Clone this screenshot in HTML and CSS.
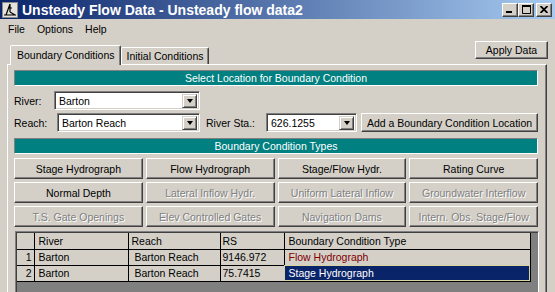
FILE: index.html
```html
<!DOCTYPE html>
<html lang="en">
<head>
  <meta charset="UTF-8">
  <title>Unsteady Flow Data - Unsteady flow data2</title>
  <link rel="stylesheet" href="styles.css">
</head>
<body>
  <!-- Title bar -->
  <div class="titlebar">
    <svg class="title-icon" width="16" height="16" viewBox="0 0 16 16">
      <rect x="0.5" y="0.5" width="15" height="15" fill="#e4e2dc" stroke="#8a8a8a"/>
      <path d="M8 2 L8 10 M8 2 L4 13 M8 10 L13 13 M2 13 L14 13 M6 6 L10 6" stroke="#000" stroke-width="1.2" fill="none"/>
    </svg>
    <span class="title-text">Unsteady Flow Data - Unsteady flow data2</span>
    <div class="title-controls">
      <span class="ctl">
        <svg width="8" height="7" viewBox="0 0 8 7"><rect x="0" y="5" width="6" height="2" fill="#000"/></svg>
      </span>
      <span class="ctl">
        <svg width="9" height="9" viewBox="0 0 9 9"><path d="M0.5 1.5 H8.5 V8.5 H0.5 Z" stroke="#000" fill="none"/><rect x="0" y="0" width="9" height="2" fill="#000"/></svg>
      </span>
      <span class="ctl close">
        <svg width="8" height="7" viewBox="0 0 8 7"><path d="M0.5 0 L7.5 7 M7.5 0 L0.5 7" stroke="#000" stroke-width="1.8"/></svg>
      </span>
    </div>
  </div>

  <!-- Menu -->
  <div class="menubar">
    <span class="menu-item">File</span>
    <span class="menu-item">Options</span>
    <span class="menu-item">Help</span>
  </div>

  <!-- Tabs + apply -->
  <div class="tabrow">
    <div class="tabs">
      <div class="tab active">Boundary Conditions</div>
      <div class="tab">Initial Conditions</div>
    </div>
    <button class="btn apply">Apply Data</button>
  </div>

  <div class="panel">
    <div class="section-bar">Select Location for Boundary Condition</div>

    <div class="field-row">
      <span class="lbl lbl-river">River:</span>
      <div class="combo combo-river">
        <span class="combo-text">Barton</span>
        <span class="combo-arrow"><i class="tri"></i></span>
      </div>
    </div>

    <div class="field-row">
      <span class="lbl lbl-reach">Reach:</span>
      <div class="combo combo-reach">
        <span class="combo-text">Barton Reach</span>
        <span class="combo-arrow"><i class="tri"></i></span>
      </div>
      <span class="lbl lbl-sta">River Sta.:</span>
      <div class="combo combo-sta">
        <span class="combo-text">626.1255</span>
        <span class="combo-arrow"><i class="tri"></i></span>
      </div>
      <button class="btn add-loc">Add a Boundary Condition Location</button>
    </div>

    <div class="section-bar types-bar">Boundary Condition Types</div>

    <div class="type-grid">
      <button class="btn">Stage Hydrograph</button>
      <button class="btn">Flow Hydrograph</button>
      <button class="btn">Stage/Flow Hydr.</button>
      <button class="btn">Rating Curve</button>
      <button class="btn">Normal Depth</button>
      <button class="btn disabled">Lateral Inflow Hydr.</button>
      <button class="btn disabled">Uniform Lateral Inflow</button>
      <button class="btn disabled">Groundwater Interflow</button>
      <button class="btn disabled">T.S. Gate Openings</button>
      <button class="btn disabled">Elev Controlled Gates</button>
      <button class="btn disabled">Navigation Dams</button>
      <button class="btn disabled">Intern. Obs. Stage/Flow</button>
    </div>

    <!-- Boundary condition table -->
    <div class="grid-wrap">
      <table class="bc-table">
        <colgroup>
          <col class="c-num"><col class="c-river"><col class="c-reach"><col class="c-rs"><col class="c-type">
        </colgroup>
        <tr>
          <th></th><th>River</th><th>Reach</th><th class="rs">RS</th><th>Boundary Condition Type</th>
        </tr>
        <tr>
          <td class="num">1</td><td>Barton</td><td class="reach">Barton Reach</td><td class="rs">9146.972</td><td class="flow">Flow Hydrograph</td>
        </tr>
        <tr>
          <td class="num">2</td><td>Barton</td><td class="reach">Barton Reach</td><td class="rs">75.7415</td><td class="selected">Stage Hydrograph</td>
        </tr>
      </table>
    </div>
  </div>
</body>
</html>
```

FILE: styles.css
```css
* {
  margin: 0;
  padding: 0;
  box-sizing: border-box;
}

body {
  font-family: "Liberation Sans", Arial, sans-serif;
  font-size: 10.5px;
  color: #000;
  background-color: #d4d0c8;
  width: 555px;
  height: 292px;
  overflow: hidden;
}

/* Title bar */
.titlebar {
  height: 19px;
  display: flex;
  align-items: center;
  padding-left: 2px;
  background: linear-gradient(to right, #0a246a, #a6caf0);
  color: white;
}

.title-icon {
  display: block;
}

.title-text {
  flex: 1;
  margin-left: 4px;
  font-weight: bold;
  font-size: 14px;
  white-space: nowrap;
}

.title-controls {
  display: flex;
  margin-right: 3px;
}

.ctl {
  width: 16px;
  height: 14px;
  display: flex;
  align-items: center;
  justify-content: center;
  background-color: #d4d0c8;
  border: 1px solid;
  border-color: #fff #404040 #404040 #fff;
  box-shadow: inset -1px -1px #808080;
}

.ctl.close {
  margin-left: 2px;
}

/* Menu */
.menubar {
  height: 20px;
  display: flex;
  align-items: center;
  padding-left: 2px;
}

.menu-item {
  padding: 0 6px;
}

/* Buttons */
.btn {
  font-family: inherit;
  font-size: inherit;
  color: #000;
  background-color: #d4d0c8;
  border: 1px solid;
  border-color: #fff #404040 #404040 #fff;
  box-shadow: inset -1px -1px #808080;
  display: flex;
  align-items: center;
  justify-content: center;
  white-space: nowrap;
}

.btn.disabled {
  color: #808080;
  text-shadow: 1px 1px #fff;
}

/* Tabs */
.tabrow {
  height: 25px;
  display: flex;
  justify-content: space-between;
}

.tabs {
  display: flex;
  align-items: flex-end;
  margin-left: 10px;
}

.tab {
  height: 17px;
  padding: 0 4px;
  display: flex;
  align-items: center;
  border: 1px solid;
  border-color: #fff #404040 transparent #fff;
  border-bottom: none;
  border-radius: 2px 2px 0 0;
  box-shadow: inset -1px 0 #808080;
}

.tab.active {
  height: 20px;
  padding: 0 6px 2px;
  margin-bottom: -1px;
  position: relative;
  z-index: 1;
  background-color: #d4d0c8;
}

.apply {
  width: 73px;
  height: 18px;
  margin-top: 2px;
  margin-right: 7px;
}

/* Tab panel */
.panel {
  margin: 0 8px 0 7px;
  height: 228px;
  overflow: hidden;
  padding: 5px 8px 0 6px;
  border-top: 1px solid #fff;
  border-left: 1px solid #fff;
  border-right: 1px solid #404040;
  box-shadow: inset -1px 0 #808080;
}

.section-bar {
  height: 16px;
  line-height: 14px;
  text-align: center;
  color: #fff;
  background-color: #008080;
  border: 1px solid;
  border-color: #808080 #fff #fff #808080;
}

.types-bar {
  margin-top: 6px;
}

.field-row {
  display: flex;
  align-items: center;
  height: 19px;
  margin-top: 5px;
}

.field-row + .field-row {
  margin-top: 3px;
}

.lbl-river { width: 40px; }
.lbl-reach { width: 43px; }
.lbl-sta { width: 60px; margin-left: 6px; }

.combo {
  height: 19px;
  display: flex;
  padding: 2px;
  background-color: #fff;
  border: 1px solid;
  border-color: #808080 #fff #fff #808080;
  box-shadow: inset 1px 1px #404040, inset -1px -1px #d4d0c8;
}

.combo-river { width: 146px; }
.combo-reach { width: 143px; }
.combo-sta { width: 91px; }

.combo-text {
  flex: 1;
  padding-left: 2px;
  line-height: 14px;
  white-space: nowrap;
}

.combo-arrow {
  width: 15px;
  height: 14px;
  display: flex;
  align-items: center;
  justify-content: center;
  background-color: #d4d0c8;
  border: 1px solid;
  border-color: #d4d0c8 #404040 #404040 #d4d0c8;
  box-shadow: inset 1px 1px #fff, inset -1px -1px #808080;
}

.tri {
  width: 0;
  height: 0;
  border-left: 3.5px solid transparent;
  border-right: 3.5px solid transparent;
  border-top: 4px solid #000;
}

.add-loc {
  width: 177px;
  height: 19px;
  margin-left: 4px;
}

/* Type buttons */
.type-grid {
  display: grid;
  grid-template-columns: repeat(4, 1fr);
  grid-auto-rows: 21px;
  gap: 3px;
  margin-top: 4px;
}

/* Table */
.grid-wrap {
  margin: 4px -1px 0 1px;
  height: 80px;
  background-color: #808080;
  border: 1px solid;
  border-color: #808080 #fff #fff #808080;
  box-shadow: inset 1px 1px #404040;
  padding: 1px 0 0 1px;
}

.bc-table {
  border-collapse: collapse;
  table-layout: fixed;
  width: 513px;
}

.c-num { width: 17px; }
.c-river { width: 94px; }
.c-reach { width: 92px; }
.c-rs { width: 64px; }
.c-type { width: 246px; }

.bc-table th,
.bc-table td {
  height: 16px;
  padding: 0 0 0 4px;
  font-weight: normal;
  text-align: left;
  white-space: nowrap;
  background-color: #d4d0c8;
  border: 1px solid #000;
  border-top: none;
  border-left: none;
}

.bc-table .num {
  text-align: right;
  padding: 0 2px 0 0;
}

.bc-table .reach {
  padding-left: 6px;
}

.bc-table th:nth-child(3) {
  padding-left: 3px;
}

.bc-table .rs {
  padding-left: 2px;
}

.bc-table .flow {
  color: #800000;
}

.bc-table .selected {
  color: #fff;
  background-color: #0a246a;
  outline: 1px solid #d8d4a0;
  outline-offset: -1px;
}
```
